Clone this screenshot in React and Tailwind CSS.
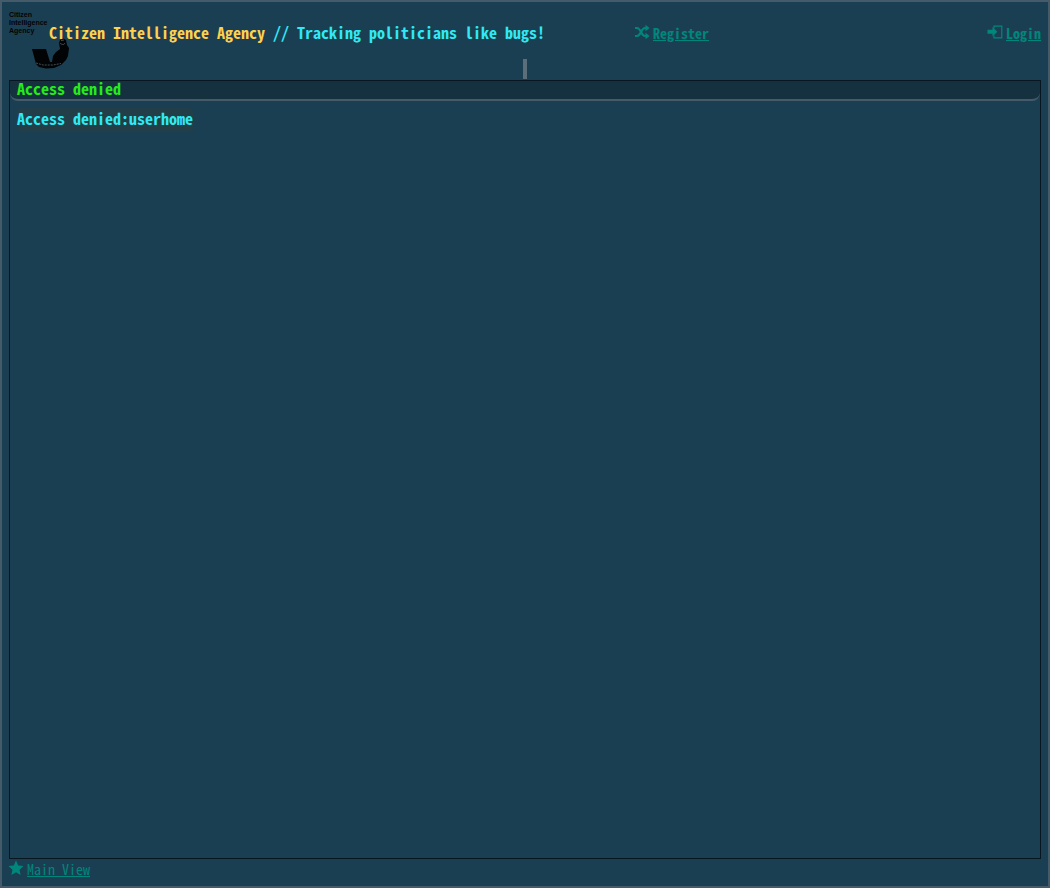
import React from "react";

function Logo() {
  return (
    <svg className="absolute top-0 left-0 h-[60px] w-[60px]" viewBox="0 0 60 60" role="img" aria-label="Citizen Intelligence Agency logo">
      <g fill="#020304" className="font-['Liberation_Sans',sans-serif] text-[7px] font-bold">
        <text x="0" y="8">Citizen</text>
        <text x="0" y="16">Intelligence</text>
        <text x="0" y="24">Agency</text>
      </g>
      <path
        fill="#020304"
        d="M23 40H37L41 53H43L44 47L47 43L51 40L50 34L51 31L54 29.5L57 31L58 36L60 39L59 47L57 51L52 56L45 59L37 59.5L30 58L27 55Z"
      />
      <path fill="none" stroke="#53626c" strokeWidth="0.8" strokeDasharray="2 1" d="M27 54L34 56L44 56L52 54.5" />
      <path fill="none" stroke="#53626c" strokeWidth="0.8" d="M51 34C53 36 55 36 56 34M52 31.5L55 31" />
    </svg>
  );
}

function ShuffleIcon() {
  return (
    <svg className="h-[14px] w-[14px] overflow-visible" viewBox="0 0 14 14" fill="none" stroke="currentColor" strokeWidth="2" aria-hidden="true">
      <path d="M0 3H2C6 3 6 11 10 11H12M0 11H2C6 11 6 3 10 3H12" />
      <path fill="currentColor" stroke="none" d="M10.5 -0.3L14.5 3L10.5 6.3ZM10.5 7.7L14.5 11L10.5 14.3Z" />
    </svg>
  );
}

function SignInIcon() {
  return (
    <svg className="h-[14px] w-[15px] overflow-visible" viewBox="0 0 15 14" aria-hidden="true">
      <path fill="none" stroke="currentColor" strokeWidth="1.2" d="M7 3.5V1.1H14.8V12.9H7V10.5" />
      <path fill="currentColor" d="M0.5 4.7H5.5V2L10.3 6.7L5.5 11.4V8.7H0.5Z" />
    </svg>
  );
}

function StarIcon() {
  return (
    <svg className="h-[14px] w-[14px] overflow-visible" viewBox="0 0 14 14" fill="currentColor" aria-hidden="true">
      <path d="M7 -0.5L9.2 4.5L14.5 5.1L10.5 8.7L11.6 14L7 11.3L2.4 14L3.5 8.7L-0.5 5.1L4.8 4.5Z" />
    </svg>
  );
}

function IconLink({ icon, children }) {
  return (
    <a href="#" className="inline-flex items-start gap-1 text-sm leading-5 text-[#00877c]">
      <span className="pt-[2px]">{icon}</span>
      <span className="underline">{children}</span>
    </a>
  );
}

export default function App() {
  return (
    <div className="flex min-h-screen flex-col border-2 border-[#465b69] bg-[#1b3f52] px-[7px] pt-[7px] font-['Noto_Sans_Mono_CJK_SC','Liberation_Mono',monospace]">
      <header className="grid h-[50px] grid-cols-[minmax(0,626fr)_minmax(0,406fr)] items-start">
        <div className="relative flex h-full items-start pt-3">
          <Logo />
          <h1 className="relative ml-10 text-base leading-[22px] font-bold whitespace-pre text-[#ffd24d]">
            Citizen Intelligence Agency <span className="text-[#2fe9f5]">// Tracking politicians like bugs!</span>
          </h1>
        </div>
        <nav className="flex items-start justify-between pt-[14px] font-bold" aria-label="Account">
          <IconLink icon={<ShuffleIcon />}>Register</IconLink>
          <IconLink icon={<SignInIcon />}>Login</IconLink>
        </nav>
      </header>
      <div className="mb-px h-5 w-1 self-center bg-[#5b6f7a]" />
      <main className="flex flex-1 flex-col border border-[#08161f]">
        <h2 className="rounded-b-lg border-b-2 border-[#465b69] bg-[#15313f] px-[7px] pb-1 text-base leading-[14px] font-bold text-[#27ea1a]">
          Access denied
        </h2>
        <p className="flex px-[7px] pt-[7px] text-base font-bold text-[#2fe9f5]">
          <span className="rounded bg-[#213e49] pb-1 leading-5">Access denied:userhome</span>
        </p>
      </main>
      <footer className="flex h-[27px] items-start">
        <IconLink icon={<StarIcon />}>Main View</IconLink>
      </footer>
    </div>
  );
}
